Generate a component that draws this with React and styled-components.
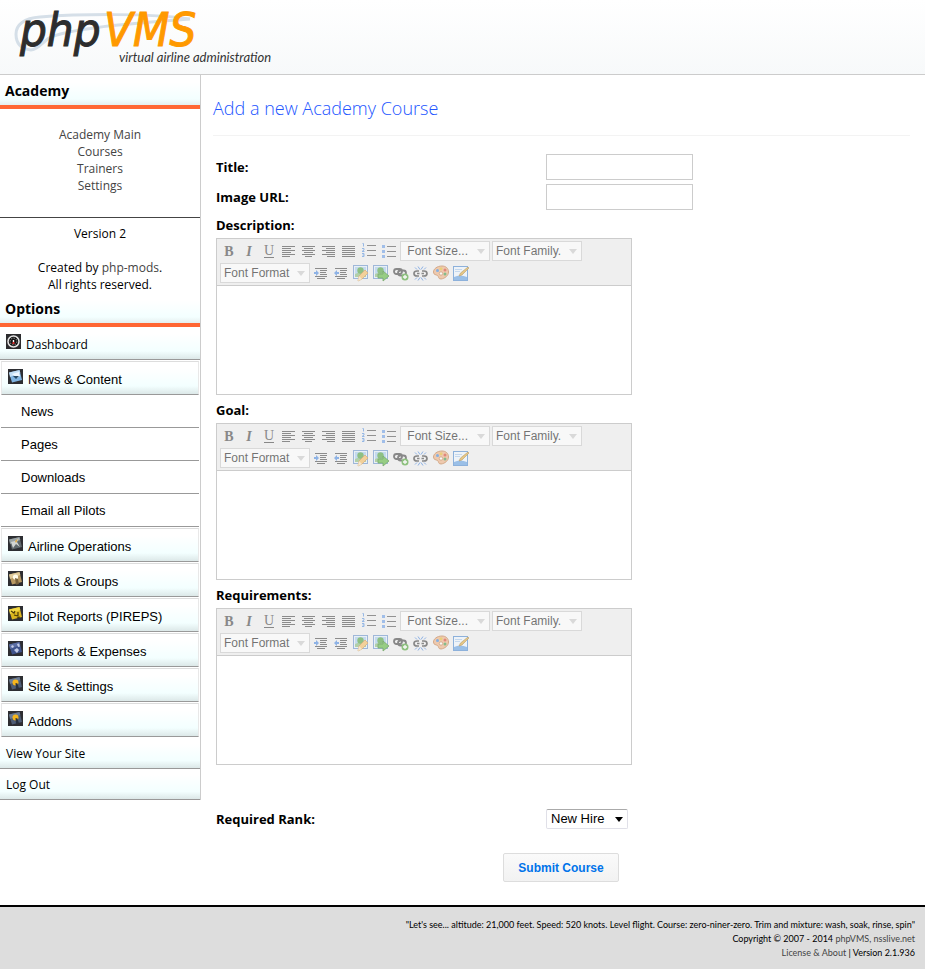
import React from 'react'
import styled, { createGlobalStyle } from 'styled-components'

const GlobalStyle = createGlobalStyle`
  * {
    box-sizing: border-box;
  }

  body {
    margin: 0;
    background: #fff;
    color: #000;
    font: 12px/17px "Open Sans", "Noto Sans", sans-serif;
  }

  a {
    color: #444;
    text-decoration: none;
  }
`

/* ---------- data ---------- */

const academyLinks = ['Academy Main', 'Courses', 'Trainers', 'Settings']
const newsLinks = ['News', 'Pages', 'Downloads', 'Email all Pilots']

const sections = [
  { title: 'Airline Operations', icon: 'plane' },
  { title: 'Pilots & Groups', icon: 'pilots' },
  { title: 'Pilot Reports (PIREPS)', icon: 'pireps' },
  { title: 'Reports & Expenses', icon: 'reports' },
  { title: 'Site & Settings', icon: 'site' },
  { title: 'Addons', icon: 'site' },
]

const editors = [
  { id: 'description', title: 'Description:' },
  { id: 'goal', title: 'Goal:' },
  { id: 'requirements', title: 'Requirements:' },
]

/* ---------- sidebar icons ---------- */

const tiles = {
  news: { card: '#7fb4e2', light: '#d3e9fa', mark: '#274a66' },
  plane: { card: '#5f686c', light: '#a9b1b3', mark: '#e0a63a' },
  pilots: { card: '#b89a63', light: '#e9d6a8', mark: '#fffbe9' },
  pireps: { card: '#d9b51e', light: '#f8e04c', mark: '#4a3b08' },
  reports: { card: '#3f548c', light: '#6475ab', mark: '#c3cce8' },
  site: { card: '#4d5d75', light: '#75869e', mark: '#f6b61c' },
}

const MenuIcon = ({ name }) => {
  if (name === 'dashboard') {
    return (
      <svg width="15" height="15" viewBox="0 0 15 15" aria-hidden="true">
        <rect width="15" height="15" fill="#2c2c2e" />
        <circle cx="7.5" cy="7.5" r="5.5" fill="#111" stroke="#e4e4e4" strokeWidth="1.5" />
        <circle cx="7.5" cy="7.5" r="3.4" fill="none" stroke="#aaa" strokeDasharray="1.4 1.2" />
        <path d="M7.5 6v2" stroke="#fff" strokeWidth="1.4" />
        <rect x="6.5" y="8" width="2" height="2" fill="#d33" />
      </svg>
    )
  }

  const tile = tiles[name]

  return (
    <svg width="15" height="15" viewBox="0 0 15 15" aria-hidden="true">
      <rect width="15" height="15" fill="#2d2e32" />
      <path d="M1 3.5L11.5 1 14 11 4 13.5z" fill={tile.card} />
      <path d="M1 3.5L11.5 1l.8 3L2 8z" fill={tile.light} opacity=".8" />
      {name === 'news' && (
        <>
          <path d="M4 5l7-2 1 4-3 2z" fill="#eef7ff" />
          <path d="M5 7h6l-3 3z" fill={tile.mark} />
        </>
      )}
      {name === 'plane' && (
        <>
          <path d="M3 6l4-1 4-3-2 4 3 5-4-3-3 4z" fill="#d2d5d3" />
          <path d="M7 5l3-2-2 4z" fill={tile.mark} />
        </>
      )}
      {name === 'pilots' && (
        <>
          <circle cx="7.5" cy="6" r="2.6" fill={tile.mark} />
          <path d="M7 7l3 1 1 5-3 .7z" fill="#76603a" />
        </>
      )}
      {name === 'pireps' && (
        <path d="M3 5l3 2 1-2M6 9l4 1V6M9 12l3-1" fill="none" stroke={tile.mark} strokeWidth="1.2" />
      )}
      {name === 'reports' && (
        <path d="M3 5l2-1 1 2-2 1zM9 3l2-.5 1 3-2 .5zM6 9l3-2 2 2-2 3z" fill={tile.mark} />
      )}
      {name === 'site' && (
        <>
          <circle cx="7.5" cy="6.5" r="3" fill={tile.mark} />
          <path d="M7.5 7l2 .5 1.5 5L8 13z" fill="#27313f" />
        </>
      )}
    </svg>
  )
}

/* ---------- editor icons ---------- */

const Lines = ({ rows }) => (
  <g stroke="#4a4a4a">
    {rows.map(([x1, x2], i) => (
      <path key={i} d={`M${x1} ${4.5 + i * 2}H${x2}`} />
    ))}
  </g>
)

const Picture = () => (
  <>
    <rect x=".5" y="1.5" width="14" height="13" fill="#e4effa" stroke="#6a93cc" />
    <rect x="2" y="3" width="11" height="10" fill="#a9cdee" />
    <path d="M2 10q5-3 11 0v3H2z" fill="#8abd7c" />
    <circle cx="7.5" cy="6.5" r="3.2" fill="#4ea23d" />
  </>
)

const letter = {
  x: 8,
  y: 14,
  textAnchor: 'middle',
  fontFamily: '"Liberation Serif", "Times New Roman", serif',
  fontSize: 14,
  fill: '#444',
}

const toolShapes = {
  bold: <text {...letter} fontWeight="bold">B</text>,
  italic: <text {...letter} fontWeight="bold" fontStyle="italic">I</text>,
  underline: (
    <>
      <text {...letter} y={13}>U</text>
      <path d="M3 15.5h10" stroke="#444" />
    </>
  ),
  left: <Lines rows={[[1, 14], [1, 10], [1, 14], [1, 10], [1, 14], [1, 9]]} />,
  center: <Lines rows={[[1, 14], [3, 12], [1, 14], [3, 12], [1, 14], [4, 11]]} />,
  right: <Lines rows={[[1, 14], [5, 14], [1, 14], [5, 14], [1, 14], [6, 14]]} />,
  justify: <Lines rows={[[1, 14], [1, 14], [1, 14], [1, 14], [1, 14], [1, 14]]} />,
  ordered: (
    <>
      <path d="M6 3.5h9M6 8.5h9M6 13.5h9" stroke="#555" />
      <path
        d="M1.5 1.5h1v3M1 6.5h2v1.5l-2 1.5h2.5M1 11.5h2v3H1M1.5 13h1.5"
        fill="none"
        stroke="#5c94e0"
      />
    </>
  ),
  unordered: (
    <>
      <path d="M6 4.5h9M6 9.5h9M6 14.5h9" stroke="#555" />
      <path d="M1 3h3v3H1zM1 8h3v3H1zM1 13h3v3H1z" fill="#6c9fe6" />
    </>
  ),
  indent: (
    <>
      <path d="M2 4.5h12M7 6.5h7M7 8.5h6M7 10.5h7M2 12.5h12M4 14.5h8" stroke="#4a4a4a" />
      <path d="M1 8h2V6l3 3-3 3v-2H1z" fill="#4d8be0" />
    </>
  ),
  outdent: (
    <>
      <path d="M2 4.5h12M7 6.5h7M7 8.5h6M7 10.5h7M2 12.5h12M4 14.5h8" stroke="#4a4a4a" />
      <path d="M6 8H4V6L1 9l3 3v-2h2z" fill="#4d8be0" />
    </>
  ),
  image: (
    <>
      <Picture />
      <path d="M5 17l1-5 6-6 3 3-6 6z" fill="#f5bd62" stroke="#c5822f" strokeWidth=".7" />
      <path d="M5 17l1-5 3 3z" fill="#f8e2bd" />
    </>
  ),
  upload: (
    <>
      <Picture />
      <path d="M5 10h5V7l6 5-6 5v-3H5z" fill="#5cb83e" stroke="#2f7d1c" strokeWidth=".8" />
    </>
  ),
  link: (
    <>
      <g fill="none" stroke="#444" strokeWidth="1.8">
        <rect x="1" y="5" width="8" height="5" rx="2.5" />
        <rect x="5" y="6.5" width="8" height="5" rx="2.5" />
      </g>
      <circle cx="12" cy="13" r="3.5" fill="#4ea436" />
      <path d="M12 11v4M10 13h4" stroke="#fff" strokeWidth="1.3" />
    </>
  ),
  unlink: (
    <>
      <path
        d="M6 7H4Q1 7 1 9.5T4 12h2M9 7h2q3 0 3 2.5T11 12H9M4 9.5h2.5M8.5 9.5H11"
        fill="none"
        stroke="#444"
        strokeWidth="1.7"
      />
      <path
        d="M5 2.5l2 3M10 2.5l-2 3M5 16.5l2-3M10 16.5l-2-3M2 3.5l2 2M13 3.5l-2 2M2 15.5l2-2M13 15.5l-2-2"
        stroke="#4d8be0"
      />
    </>
  ),
  color: (
    <>
      <path
        d="M9 2c4 0 6.5 2.5 6.5 6S12 14.500 8 15c-3 0-2-2.500-3.500-3.500S.5 11 .5 8 4 2 9 2z"
        fill="#eeb184"
        stroke="#c27c46"
      />
      <circle cx="4.5" cy="6.5" r="1.5" fill="#3f86d8" />
      <circle cx="8" cy="4.8" r="1.5" fill="#e8ba2f" />
      <circle cx="12" cy="6" r="1.5" fill="#d8432f" />
      <circle cx="12" cy="10" r="1.5" fill="#3f9a4a" />
      <circle cx="8" cy="9.5" r="1.7" fill="#fff" stroke="#b5672d" strokeWidth=".7" />
    </>
  ),
  html: (
    <>
      <rect x=".5" y="2.5" width="14" height="14" fill="#eef6ff" stroke="#4d88cf" />
      <path d="M1 13q6-3 13 0v3H1z" fill="#62a0e3" />
      <path d="M2 5.5h7M2 7.5h5" stroke="#a9c9ee" />
      <path d="M6 12l1.5-3L15 3l1 1-7 7z" fill="#e2ae3e" stroke="#94691d" strokeWidth=".6" />
    </>
  ),
}

const toolRowOne = [
  ['bold', 'Bold'],
  ['italic', 'Italic'],
  ['underline', 'Underline'],
  ['left', 'Left Align'],
  ['center', 'Center Align'],
  ['right', 'Right Align'],
  ['justify', 'Justify Align'],
  ['ordered', 'Insert Ordered List'],
  ['unordered', 'Insert Unordered List'],
]

const toolRowTwo = [
  ['indent', 'Indent Text'],
  ['outdent', 'Remove Indent'],
  ['image', 'Add Image'],
  ['upload', 'Upload Image'],
  ['link', 'Add Link'],
  ['unlink', 'Remove Link'],
  ['color', 'Change Text Color'],
  ['html', 'Edit HTML'],
]

const Tools = ({ items }) =>
  items.map(([name, label]) => (
    <Tool key={name} type="button" aria-label={label}>
      <svg width="18" height="18" viewBox="0 0 18 18" aria-hidden="true">
        {toolShapes[name]}
      </svg>
    </Tool>
  ))

const Picker = ({ label }) => (
  <PickerSelect aria-label={label}>
    <option>{label}</option>
  </PickerSelect>
)

const Editor = ({ id, title }) => (
  <EditorField>
    <Label htmlFor={id}>{title}</Label>
    <EditorBox>
      <Toolbar>
        <ToolRow>
          <Tools items={toolRowOne} />
          <Picker label={'\u00a0Font Size...'} />
          <Picker label="Font Family." />
        </ToolRow>
        <ToolRow>
          <Picker label="Font Format" />
          <Tools items={toolRowTwo} />
        </ToolRow>
      </Toolbar>
      <EditorArea id={id} />
    </EditorBox>
  </EditorField>
)

const Logo = () => (
  <svg width="280" height="74" viewBox="0 0 280 74" role="img" aria-label="phpVMS virtual airline administration">
    <path
      d="M190 19C150 13 80 14 40 17 24 18 16 25 16 34c0 9 5 15 15 16 6 0 10-6 18-12 20-10 80-14 141-19"
      fill="none"
      stroke="#d5dfe8"
      strokeWidth="3"
    />
    <g fontFamily="'DejaVu Sans Condensed', 'DejaVu Sans', sans-serif" fontStyle="italic" fontSize="47" strokeWidth="1">
      <text x="20" y="46" fill="#2d2d2d" stroke="#2d2d2d">php</text>
      <text x="104" y="46" fill="#ff9900" stroke="#ff9900">VMS</text>
    </g>
    <text x="119" y="62" fontSize="13" fontFamily="Lato, sans-serif" fontStyle="italic" fill="#333">
      virtual airline administration
    </text>
  </svg>
)

const App = () => {
  return (
    <>
      <GlobalStyle />
      <Header>
        <Logo />
      </Header>

      <Columns>
        <Sidebar>
          <SideTitle>Academy</SideTitle>
          <AcademyNav>
            {academyLinks.map((link) => (
              <a key={link} href="#">{link}</a>
            ))}
          </AcademyNav>
          <Credits>
            Version 2<br />
            <br />
            Created by <a href="#">php-mods</a>.<br />
            All rights reserved.
          </Credits>

          <SideTitle>Options</SideTitle>
          <TopLink href="#">
            <MenuIcon name="dashboard" />
            Dashboard
          </TopLink>

          <Menu>
            <MenuHead type="button">
              <MenuIcon name="news" />
              News &amp; Content
            </MenuHead>
            {newsLinks.map((link) => (
              <SubLink key={link} href="#">{link}</SubLink>
            ))}
            {sections.map(({ title, icon }) => (
              <MenuHead key={title} type="button">
                <MenuIcon name={icon} />
                {title}
              </MenuHead>
            ))}
          </Menu>

          <PlainLink href="#">View Your Site</PlainLink>
          <PlainLink href="#">Log Out</PlainLink>
        </Sidebar>

        <Content>
          <Title>Add a new Academy Course</Title>
          <Form>
            <Row>
              <Label htmlFor="title">Title:</Label>
              <TextInput id="title" type="text" />
            </Row>
            <Row>
              <Label htmlFor="image">Image URL:</Label>
              <TextInput id="image" type="text" />
            </Row>
            {editors.map((editor) => (
              <Editor key={editor.id} {...editor} />
            ))}
            <RankRow>
              <Label htmlFor="rank">Required Rank:</Label>
              <RankSelect id="rank">
                <option>New Hire</option>
              </RankSelect>
            </RankRow>
            <Actions>
              <Submit type="button">Submit Course</Submit>
            </Actions>
          </Form>
        </Content>
      </Columns>

      <Footer>
        "Let's see... altitude: 21,000 feet. Speed: 520 knots. Level flight. Course: zero-niner-zero. Trim and mixture: wash, soak, rinse, spin"
        <br />
        Copyright © 2007 - 2014 <a href="#">phpVMS, nsslive.net</a>
        <br />
        <a href="#">License &amp; About</a> | Version 2.1.936
      </Footer>
    </>
  )
}

/* ---------- page ---------- */

const Header = styled.header`
  height: 75px;
  border-bottom: 1px solid #ccc;
  background: linear-gradient(#fff, #f7f9fa);

  svg {
    display: block;
    overflow: visible;
  }
`

const Columns = styled.div`
  display: flex;
  align-items: flex-start;
`

const Sidebar = styled.aside`
  flex: none;
  width: 201px;
  border-right: 1px solid #ccc;
`

const Content = styled.main`
  flex: 1;
  min-width: 0;
  padding: 20px 15px 23px 12px;
`

const Footer = styled.footer`
  padding: 11px 10px 10px;
  border-top: 2px solid #000;
  background: #ddd;
  font-family: Lato, "Open Sans", sans-serif;
  font-size: 9px;
  line-height: 14px;
  text-align: right;
`

/* ---------- sidebar ---------- */

const fade = 'linear-gradient(#fff 20%, #f3ffff 75%, #dce8e8)'

const SideTitle = styled.h3`
  height: 34px;
  margin: 0;
  padding: 0 5px;
  border-bottom: 4px solid #ff6633;
  background: linear-gradient(#fff 25%, #f3ffff 80%, #e4eeee);
  font-size: 14px;
  line-height: 32px;
`

const AcademyNav = styled.nav`
  display: flex;
  flex-direction: column;
  align-items: center;
  padding: 17px 0 23px;
  border-bottom: 1px solid #444;
`

const Credits = styled.p`
  margin: 0;
  padding-top: 7px;
  text-align: center;
`

const TopLink = styled.a`
  display: flex;
  gap: 5px;
  height: 33px;
  padding: 7px 6px 0;
  border-bottom: 1px solid #999;
  background: ${fade};
  color: #000;
  line-height: 22px;
`

const Menu = styled.div`
  display: flex;
  flex-direction: column;
  padding: 0 1px 1px;
  font: 13px/20px "Liberation Sans", Arial, sans-serif;
`

const MenuHead = styled.button`
  display: flex;
  gap: 5px;
  height: 34px;
  margin-top: 1px;
  padding: 7px 6px 0;
  border: 1px solid #e8e8e8;
  border-top-color: #ddd;
  border-bottom-color: #999;
  background: ${fade};
  color: #000;
  font: inherit;
  line-height: 21px;
  cursor: pointer;
`

const SubLink = styled.a`
  height: 33px;
  padding: 0 20px;
  border-bottom: 1px solid #999;
  color: #000;
  line-height: 34px;
`

const PlainLink = styled.a`
  display: block;
  height: 31px;
  padding: 0 6px;
  border-bottom: 1px solid #999;
  background: ${fade};
  color: #000;
  line-height: 32px;
`

/* ---------- form ---------- */

const Title = styled.h1`
  margin: 0;
  padding-bottom: 14px;
  border-bottom: 1px solid #f3f3f3;
  color: #2255ff;
  font-size: 18px;
  font-weight: 300;
  line-height: 26px;
`

const Form = styled.form`
  padding: 16px 3px 0;
`

const Row = styled.div`
  display: grid;
  grid-template-columns: 330px auto;
  align-items: center;
  justify-content: start;
  height: 30px;
`

const RankRow = styled(Row)`
  margin-top: 39px;
`

const Label = styled.label`
  font-size: 13px;
  font-weight: 700;
`

const TextInput = styled.input`
  width: 147px;
  height: 26px;
  padding: 3px;
  border: 1px solid #ccc;
  background: #fff;
`

const EditorField = styled.div`
  display: grid;
  margin-bottom: 2px;
  line-height: 26px;
`

const EditorBox = styled.div`
  width: 416px;
  max-width: 100%;
  border: 1px solid #ccc;
`

const Toolbar = styled.div`
  padding: 2px 3px 0;
  border-bottom: 1px solid #ccc;
  background: #efefef;
`

const ToolRow = styled.div`
  display: flex;
  height: 22px;
  opacity: 0.6;
`

const Tool = styled.button`
  display: grid;
  place-items: center;
  width: 20px;
  height: 20px;
  padding: 0;
  border: 0;
  background: none;
`

const arrow = (color) =>
  `url("data:image/svg+xml,%3Csvg xmlns='http://www.w3.org/2000/svg' width='8' height='5'%3E%3Cpath d='M0 0h8L4 5z' fill='%23${color}'/%3E%3C/svg%3E")`

const PickerSelect = styled.select`
  appearance: none;
  width: 90px;
  height: 20px;
  margin-right: 2px;
  padding: 0 14px 0 3px;
  border: 1px solid #ccc;
  border-radius: 0;
  background: #fff ${arrow('ccc')} no-repeat right 4px center;
  color: #222;
  font: 12px/18px "Liberation Sans", Arial, sans-serif;
`

const EditorArea = styled.textarea`
  display: block;
  width: 100%;
  height: 108px;
  padding: 4px;
  border: 0;
  outline: 0;
  resize: none;
`

const RankSelect = styled.select`
  appearance: none;
  width: 82px;
  height: 20px;
  padding: 0 4px;
  border: 1px solid #e0e0e8;
  border-top-color: #aaa;
  border-radius: 2px;
  background: #fff ${arrow('000')} no-repeat right 4px center;
  color: #000;
  font: 13px/18px "Liberation Sans", Arial, sans-serif;
`

const Actions = styled.div`
  padding: 19px 0 0 287px;
`

const Submit = styled.button`
  width: 116px;
  height: 29px;
  padding: 0;
  border: 1px solid #ddd;
  border-radius: 2px;
  background: linear-gradient(#fafafa, #f2f2f2);
  color: #0073ea;
  font: bold 12px "Liberation Sans", Arial, sans-serif;
`

export default App
